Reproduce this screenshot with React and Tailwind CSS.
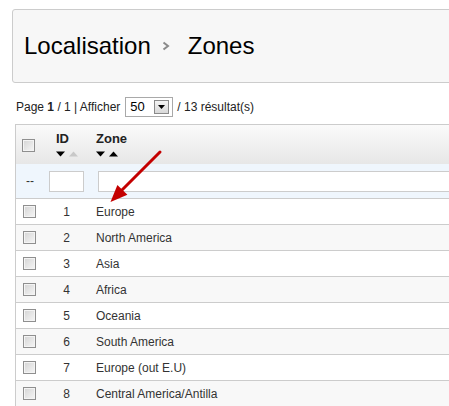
import React from "react";

const zones = [
  [1, "Europe"],
  [2, "North America"],
  [3, "Asia"],
  [4, "Africa"],
  [5, "Oceania"],
  [6, "South America"],
  [7, "Europe (out E.U)"],
  [8, "Central America/Antilla"],
];

function Checkbox() {
  return (
    <div className="w-[13px] h-[13px] border border-[#8f8f8f] bg-[linear-gradient(135deg,#d4d4d4,#f6f6f6)] shadow-[inset_0_0_0_1px_#f4f4f4]" />
  );
}

function SortArrows({ upDark }) {
  return (
    <svg width="22" height="6" viewBox="0 0 22 6">
      <polygon points="0,0.5 9,0.5 4.5,5.5" fill="#000" />
      <polygon points="13,5.5 22,5.5 17.5,0.5" fill={upDark ? "#000" : "#c8c8c8"} />
    </svg>
  );
}

export default function App() {
  return (
    <div
      className="relative w-[449px] h-[406px] overflow-hidden bg-white text-[#333]"
      style={{ fontFamily: '"Liberation Sans", Arial, sans-serif' }}
    >
      {/* Title panel */}
      <div className="pt-[9px] pl-[12px]">
        <div className="flex items-center w-[520px] h-[74px] border border-[#cccccc] rounded-[3px] bg-[#f7f7f7] pl-[11px] text-[24px] text-black">
          <span>Localisation</span>
          <svg className="ml-[11px]" width="8" height="10" viewBox="0 0 8 10">
            <polyline points="1.5,1.5 6,5 1.5,8.5" fill="none" stroke="#8a8a8a" strokeWidth="2" />
          </svg>
          <span className="ml-[18px]">Zones</span>
        </div>
      </div>

      {/* Pagination line */}
      <div className="mt-[14px] pl-[16px] flex items-center h-[20px] text-[12px] text-[#222]">
        <span>
          Page <b>1</b> / 1 | Afficher
        </span>
        <div className="ml-[5px] w-[48px] h-[20px] border border-[#a9a9a9] bg-white flex items-center justify-between pl-[4px] pr-[3px]">
          <span className="text-[13px] text-black">50</span>
          <div className="w-[15px] h-[14px] border border-[#8a8a8a] bg-[linear-gradient(#f4f4f4,#d8d8d8)] flex items-center justify-center">
            <svg width="7" height="4" viewBox="0 0 7 4">
              <polygon points="0,0 7,0 3.5,4" fill="#000" />
            </svg>
          </div>
        </div>
        <span className="ml-[4px]">/ 13 résultat(s)</span>
      </div>

      {/* Table */}
      <div className="mt-[7px] ml-[15px] w-[520px] border-l border-t border-[#cccccc] text-[12px]">
        {/* Header */}
        <div className="flex h-[39px] bg-[linear-gradient(#fafafa,#e7e7e7)]">
          <div className="w-[29px] pl-[6px] pt-[14px]">
            <Checkbox />
          </div>
          <div className="w-[43px] pl-[11px] pt-[6px] flex flex-col">
            <span className="text-[13px] font-bold leading-[15px] text-[#222]">ID</span>
            <div className="mt-[5px]">
              <SortArrows upDark={false} />
            </div>
          </div>
          <div className="flex-1 pl-[8px] pt-[6px] flex flex-col">
            <span className="text-[13px] font-bold leading-[15px] text-[#222]">Zone</span>
            <div className="mt-[5px]">
              <SortArrows upDark={true} />
            </div>
          </div>
        </div>

        {/* Filter row */}
        <div className="flex items-center h-[35px] bg-[#eff6fd] border-b border-[#cccccc]">
          <div className="w-[29px] pl-[10px] text-[#333]">--</div>
          <div className="w-[43px] pl-[4px]">
            <div className="w-[35px] h-[21px] border border-[#cccccc] bg-white" />
          </div>
          <div className="flex-1 pl-[10px]">
            <div className="w-[420px] h-[21px] border border-[#cccccc] bg-white" />
          </div>
        </div>

        {/* Data rows */}
        {zones.map(([id, name], i) => (
          <div
            key={id}
            className={`flex items-center h-[26px] border-b border-[#cccccc] ${
              i % 2 === 1 ? "bg-[#f8f8f8]" : "bg-white"
            }`}
          >
            <div className="w-[29px] pl-[7px]">
              <Checkbox />
            </div>
            <div className="w-[43px] text-center text-[#333]">{id}</div>
            <div className="flex-1 pl-[8px] text-[#333]">{name}</div>
          </div>
        ))}
      </div>

      {/* Red arrow annotation */}
      <svg
        className="absolute left-0 top-0 pointer-events-none"
        width="449"
        height="406"
        viewBox="0 0 449 406"
      >
        <line x1="160" y1="152" x2="122" y2="190" stroke="#c40000" strokeWidth="3" strokeLinecap="round" />
        <polygon points="110.5,202 127.4,194.8 117.4,185" fill="#c40000" />
      </svg>
    </div>
  );
}
